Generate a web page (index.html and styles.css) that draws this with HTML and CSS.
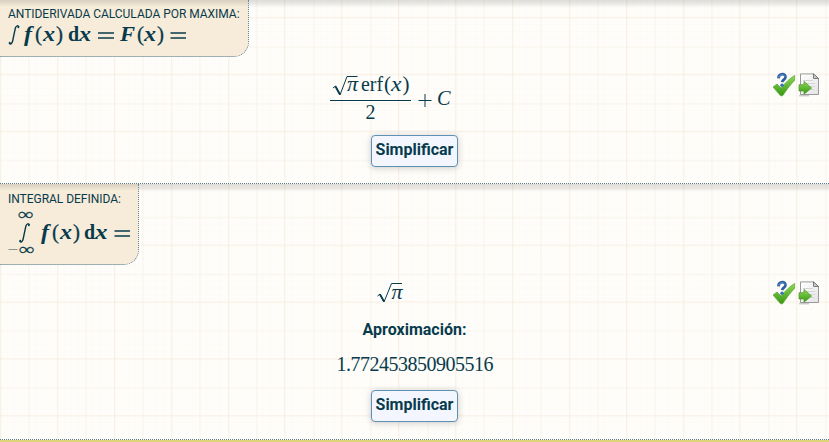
FILE: index.html
```html
<!DOCTYPE html>
<html lang="es">
<head>
<meta charset="utf-8">
<title>Integral</title>
<link rel="stylesheet" href="styles.css">
</head>
<body>
<svg class="defs" width="0" height="0" aria-hidden="true">
  <defs>
    <linearGradient id="green" x1="0" y1="0" x2="0" y2="1"><stop offset="0" stop-color="#8ed957"/><stop offset="1" stop-color="#399812"/></linearGradient>
    <linearGradient id="paper" x1="0" y1="0" x2="1" y2="1"><stop offset="0" stop-color="#fff"/><stop offset="1" stop-color="#e3e3e3"/></linearGradient>
    <symbol id="integral" viewBox="0 0 12 22"><path d="M11 2.8C10.7.7 8.2.9 7.4 3.9L4.6 17.2C4 20.6 1.8 21.4 1 19.4" fill="none" stroke="currentColor" stroke-width="1.5"/><circle cx="10.6" cy="2.8" r="1" fill="currentColor"/><circle cx="1.5" cy="19.1" r="1" fill="currentColor"/></symbol>
    <symbol id="tools" viewBox="0 0 48 26">
      <path d="M1 15L5 12L9.2 16C13 11 17.5 6.6 22.600 3.4V8.4C18 13 14.5 18 10.600 23.800H8.600Z" fill="url(#green)" stroke="#5aa638" stroke-width=".7"/>
      <path d="M6.400 6.3C6.9.8 14 1.2 13.4 5.4C13.1 7.8 10.4 7.6 10.200 10.2" fill="none" stroke="#315f9e" stroke-width="2.8"/>
      <path d="M6.6 5.5C7.7 1.8 12.8 2.2 12.7 5" fill="none" stroke="#6da0dc" stroke-width=".9"/>
      <circle cx="10" cy="13.2" r="1.7" fill="#3d70b4"/>
      <path d="M28.5 1.9H41.5L46.5 6.5V22.5H28.5Z" fill="url(#paper)" stroke="#999"/>
      <path d="M41.5 1.9V6.5H46.5Z" fill="#ccc" stroke="#666" stroke-width=".8"/>
      <path d="M31 8.5H41M31 11.5H43M37 14.5H43M37 17.5H42" stroke="#d4d4d4"/>
      <path d="M27 23.8H37" stroke="#b5b5b5"/>
      <path d="M27 12.7H32V9.4L39.6 16L32 22.2V19H27Z" fill="url(#green)" stroke="#4d9632" stroke-width=".7"/>
    </symbol>
  </defs>
</svg>
<section class="panel first">
  <header class="tag">
    <div class="caption">ANTIDERIVADA CALCULADA POR MAXIMA:</div>
    <svg class="math bold" width="190" height="26" viewBox="8 21 190 26">
      <use href="#integral" x="8" y="24.5" width="12" height="21"/>
      <text class="it" x="24" y="41" textLength="8" lengthAdjust="spacingAndGlyphs">f</text>
      <text class="paren" x="35" y="41">(</text>
      <text class="it" x="43" y="41" textLength="12" lengthAdjust="spacingAndGlyphs">x</text>
      <text class="paren" x="56" y="41">)</text>
      <text x="68" y="41">d</text>
      <text class="it" x="79" y="41" textLength="12" lengthAdjust="spacingAndGlyphs">x</text>
      <path d="M98 33H114M98 38H114"/>
      <text class="it" x="120" y="41" textLength="15" lengthAdjust="spacingAndGlyphs">F</text>
      <text class="paren" x="137" y="41">(</text>
      <text class="it" x="144" y="41" textLength="12" lengthAdjust="spacingAndGlyphs">x</text>
      <text class="paren" x="157" y="41">)</text>
      <path d="M170.500 33H186M170.500 38H186"/>
    </svg>
  </header>
  <div class="result">
    <svg class="math" width="126" height="54" viewBox="328 70 126 54">
      <path class="root" d="M333 87L335.500 85L340 94L347 75.500H357.500"/>
      <path class="stem" d="M335.500 85.500L340 93.500"/>
      <text class="it" x="347" y="90" textLength="11" lengthAdjust="spacingAndGlyphs">π</text>
      <text x="361" y="90" textLength="22" lengthAdjust="spacingAndGlyphs">erf</text>
      <text class="paren" x="384" y="90">(</text>
      <text class="it" x="391" y="90" textLength="10.500" lengthAdjust="spacingAndGlyphs">x</text>
      <text class="paren" x="402.500" y="90">)</text>
      <path d="M330 99.500H411"/>
      <text x="365.500" y="118">2</text>
      <path d="M418.500 99.500H431.500M425 93V106"/>
      <text class="it" x="437" y="104" textLength="13.500" lengthAdjust="spacingAndGlyphs">C</text>
    </svg>
    <button>Simplificar</button>
  </div>
  <svg class="tools" width="48" height="26"><use href="#tools"/></svg>
</section>
<section class="panel second">
  <header class="tag">
    <div class="caption">INTEGRAL DEFINIDA:</div>
    <svg class="math bold" width="124" height="48" viewBox="8 208 124 48">
      <text class="inf" x="18" y="220" textLength="16" lengthAdjust="spacingAndGlyphs">∞</text>
      <use href="#integral" x="18.500" y="222.500" width="12" height="21"/>
      <path class="minus" d="M8.500 249.500H17.500"/>
      <text class="inf" x="19" y="254.500" textLength="16" lengthAdjust="spacingAndGlyphs">∞</text>
      <text class="it" x="41" y="239" textLength="8" lengthAdjust="spacingAndGlyphs">f</text>
      <text class="paren" x="52" y="239">(</text>
      <text class="it" x="60" y="239" textLength="12" lengthAdjust="spacingAndGlyphs">x</text>
      <text class="paren" x="73" y="239">)</text>
      <text x="84" y="239">d</text>
      <text class="it" x="95" y="239" textLength="12.500" lengthAdjust="spacingAndGlyphs">x</text>
      <path d="M114.500 231H130M114.500 236H130"/>
    </svg>
  </header>
  <div class="result">
    <svg class="math" width="28" height="25" viewBox="376 280 28 25">
      <path class="root" d="M377.500 296L380 294L384 302L391.500 283.500H402"/>
      <path class="stem" d="M380 294.500L384 301.500"/>
      <text class="it" x="391.500" y="298.500" textLength="11" lengthAdjust="spacingAndGlyphs">π</text>
    </svg>
    <strong>Aproximación:</strong>
    <svg class="math number" width="160" height="24" viewBox="335 352 160 24"><text x="336.500" y="370" textLength="157" lengthAdjust="spacing">1.772453850905516</text></svg>
    <button>Simplificar</button>
  </div>
  <svg class="tools" width="48" height="26"><use href="#tools"/></svg>
</section>
<footer></footer>
</body>
</html>
```
FILE: styles.css
```css
* { box-sizing: border-box; }
body {
  margin: 0;
  height: 442px;
  overflow: hidden;
  color: #073b4c;
  font-family: Roboto, sans-serif;
  background-color: #fefdf9;
  background-image:
    repeating-linear-gradient(90deg, #f9e6d455 0 1px, transparent 1px 56.880px),
    repeating-linear-gradient(180deg, #f9e6d455 0 1px, transparent 1px 56.880px),
    repeating-linear-gradient(90deg, #f5ece244 0 2px, transparent 2px 28.440px),
    repeating-linear-gradient(90deg, #efece61a 0 1px, transparent 1px 7.110px),
    repeating-linear-gradient(180deg, #efece61a 0 1px, transparent 1px 7.110px),
    repeating-linear-gradient(180deg, #f5ece244 0 2px, transparent 2px 28.440px);
  background-size: 910.08px 455.04px;
  background-position: 0 0, 0 17px, 0 0, 0 0, 0 17px, 0 17px;
}
.defs { position: absolute; }
.panel {
  display: grid;
  grid-template-columns: 1fr auto;
  align-content: start;
  border-bottom: 1px dotted #607987;
  background: linear-gradient(#0002, #00000012 4px, transparent 8px) 0 0 / 100% 8px no-repeat;
}
.first { height: 184px; }
.second { height: 256px; }
.tag {
  grid-column: 1 / -1;
  justify-self: start;
  padding: 7px 7px 0 8px;
  border: dotted #668ba2;
  border-width: 0 1px 1px 0;
  border-bottom-right-radius: 15px;
  background: linear-gradient(#d8cfc0, #f7ecd9 7px);
}
.first .tag { width: 249px; height: 57px; }
.second .tag { width: 139px; height: 81px; }
.caption { height: 14px; font-size: 12px; line-height: 14px; letter-spacing: -.03px; white-space: nowrap; }
.second .caption { height: 17px; line-height: 16px; }
.math { display: block; overflow: visible; fill: currentColor; stroke: none; font: 20px "Liberation Serif", serif; }
.math path { fill: none; stroke: currentColor; stroke-width: 1; }
.math .it { font-style: italic; }
.math .paren { font-size: 21px; }
.bold { font-weight: bold; }
.bold .paren { font-weight: normal; stroke: currentColor; stroke-width: .3px; }
.bold .inf { font-size: 17px; font-weight: normal; stroke: currentColor; stroke-width: .2px; }
.bold path { stroke-width: 1.3; }
.math .stem { stroke-width: 1.8; }
.math .minus { stroke: #899493; stroke-width: 1; }
.result { display: flex; flex-direction: column; align-items: center; padding-left: 57px; }
.first .result { padding-top: 14px; }
.first .result > .math { margin-right: 47px; }
.second .result { padding-top: 15px; }
.second .result > .math:first-child { margin-right: 49px; }
button {
  width: 87px;
  height: 32px;
  padding: 0 0 3px;
  border: 1px solid #5f91b5;
  border-radius: 4px;
  background: #f3f6ff;
  box-shadow: 0 1px 7px #0003;
  color: #073b4c;
  font: bold 16px Roboto, sans-serif;
}
.first button { margin-top: 10px; }
.second button { margin-top: 13px; }
strong { height: 20px; margin-top: 15px; font-size: 16px; line-height: 20px; }
.number { margin-top: 13px; }
.tools { display: block; margin-right: 9px; }
.first .tools { margin-top: 15px; }
.second .tools { margin-top: 15px; }
footer { height: 2px; background: #ddd477; }
```
